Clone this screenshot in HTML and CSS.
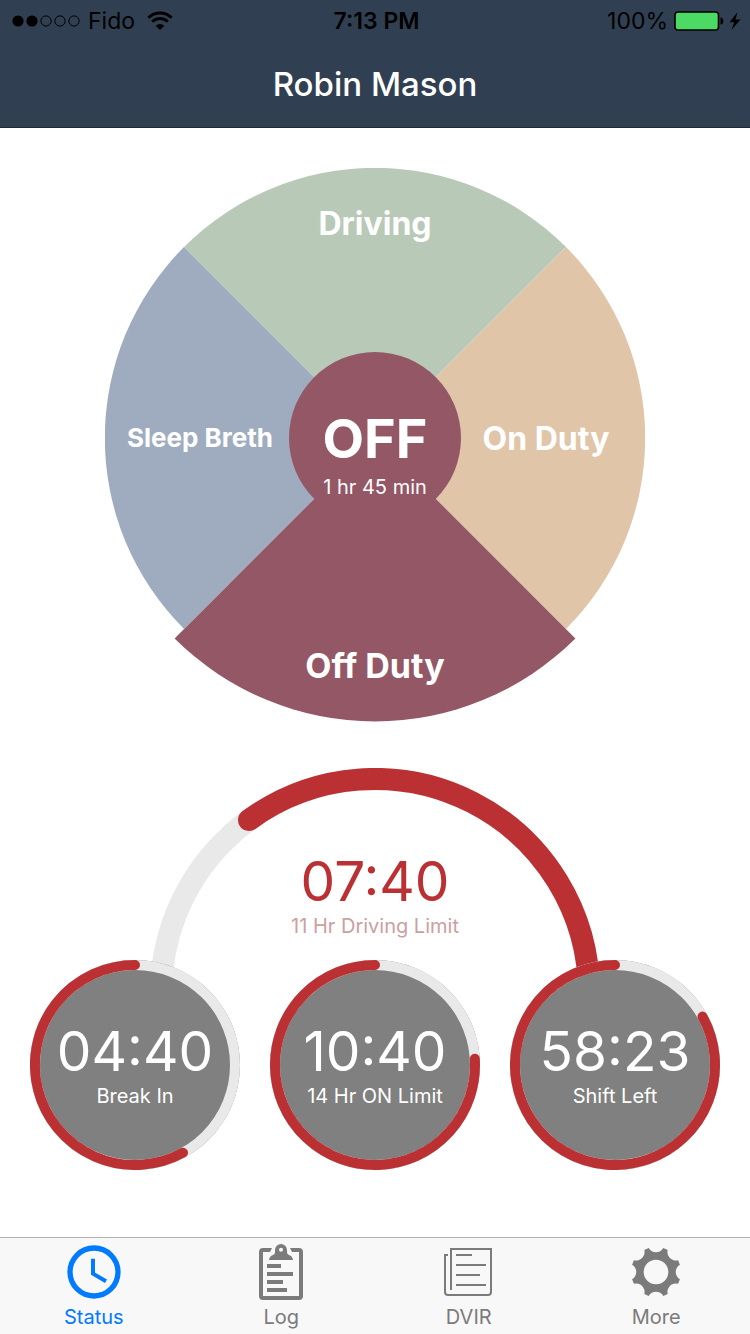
FILE: index.html
```html
<!DOCTYPE html>
<html lang="en">
<head>
<meta charset="utf-8">
<meta name="viewport" content="width=device-width, initial-scale=1">
<title>Robin Mason</title>
<link rel="stylesheet" href="styles.css">
</head>
<body>
<div class="app">
  <header class="header">
    <div class="statusbar">
      <div class="carrier">
        <svg class="signal" viewBox="0 0 68 12" width="68" height="12" aria-hidden="true">
          <circle cx="6" cy="6" r="5.6"/><circle cx="20" cy="6" r="5.6"/>
          <g fill="none" stroke="#000"><circle cx="34" cy="6" r="5.1"/><circle cx="48" cy="6" r="5.1"/><circle cx="62" cy="6" r="5.1"/></g>
        </svg>
        <span>Fido</span>
        <svg class="wifi" viewBox="0 0 26 20" width="26" height="20" aria-hidden="true">
          <g fill="none" stroke="#000" stroke-width="2.9"><path d="M1.4 6.8a16.400 16.400 0 0 1 23.2 0"/><path d="M5.2 10.800a11 11 0 0 1 15.600 0"/></g>
          <path d="M13 19l-4.300-4.300a6.100 6.100 0 0 1 8.600 0z"/>
        </svg>
      </div>
      <div class="time">7:13 PM</div>
      <div class="power">
        <span>100%</span>
        <svg viewBox="0 0 67 20" width="67" height="20" aria-hidden="true">
          <rect x="1" y="1" width="43.5" height="18" rx="3" fill="#4cd964" stroke="#000" stroke-width="1.6"/>
          <path d="M46.5 6.5q2.8.4 2.8 3.5t-2.8 3.5z"/>
          <path d="M63.5 1L55.5 11.2h4.7L57.5 19 66.500 8.500h-5z"/>
        </svg>
      </div>
    </div>
    <h1 class="title">Robin Mason</h1>
  </header>

  <main class="main">
    <section class="wheel" aria-label="Duty status">
      <svg class="wheel-art" viewBox="0 0 540 554" aria-hidden="true">
        <path fill="#b9c9b8" d="M270 270L79 79A270 270 0 0 1 461 79Z"/>
        <path fill="#e0c5a9" d="M270 270L461 79A270 270 0 0 1 461 461Z"/>
        <path fill="#9facc0" d="M270 270L79 461A270 270 0 0 1 79 79Z"/>
        <path fill="#945766" d="M270 270L470.400 470.400A283.400 283.400 0 0 1 69.600 470.400Z"/>
        <circle fill="#945766" cx="270" cy="270" r="86"/>
      </svg>
      <div class="wheel-labels">
        <button class="slice slice-driving" type="button">Driving</button>
        <button class="slice slice-sleep" type="button">Sleep Breth</button>
        <div class="current">
          <strong class="current-code">OFF</strong>
          <span class="caption">1 hr 45 min</span>
        </div>
        <button class="slice slice-on" type="button">On Duty</button>
        <button class="slice slice-off" type="button">Off Duty</button>
      </div>
    </section>

    <section class="gauges" aria-label="Hours remaining">
      <div class="arc">
        <svg class="gauge-art" viewBox="0 0 450 225" aria-hidden="true">
          <g fill="none" stroke-width="22">
            <path stroke="#e9e9e9" d="M11 225A214 214 0 0 1 439 225"/>
            <path stroke="#bb3133" stroke-linecap="round" d="M99 52A214 214 0 0 1 439 225"/>
          </g>
        </svg>
        <div class="reading arc-reading">
          <span class="value">07:40</span>
          <span class="caption">11 Hr Driving Limit</span>
        </div>
      </div>
      <div class="dials">
        <div class="dial">
          <svg class="gauge-art" viewBox="0 0 210 210" aria-hidden="true">
            <circle cx="105" cy="105" r="105" fill="#808080"/>
            <circle class="ring" cx="105" cy="105" r="100"/>
            <path class="progress" d="M105 5A100 100 0 1 0 153 192.700"/>
          </svg>
          <div class="reading"><span class="value">04:40</span><span class="caption">Break In</span></div>
        </div>
        <div class="dial">
          <svg class="gauge-art" viewBox="0 0 210 210" aria-hidden="true">
            <circle cx="105" cy="105" r="105" fill="#808080"/>
            <circle class="ring" cx="105" cy="105" r="100"/>
            <path class="progress" d="M105 5A100 100 0 1 0 204.800 98.700"/>
          </svg>
          <div class="reading"><span class="value">10:40</span><span class="caption">14 Hr ON Limit</span></div>
        </div>
        <div class="dial">
          <svg class="gauge-art" viewBox="0 0 210 210" aria-hidden="true">
            <circle cx="105" cy="105" r="105" fill="#808080"/>
            <circle class="ring" cx="105" cy="105" r="100"/>
            <path class="progress" d="M105 5A100 100 0 1 0 192.500 56.600"/>
          </svg>
          <div class="reading"><span class="value">58:23</span><span class="caption">Shift Left</span></div>
        </div>
      </div>
    </section>
  </main>

  <nav class="tabs" aria-label="Main">
    <a class="tab tab-active" href="#status" aria-current="page">
      <svg class="tab-icon" viewBox="0 0 60 56" aria-hidden="true"><g fill="none" stroke="currentColor"><circle cx="30" cy="28" r="24" stroke-width="5.300"/><path stroke-width="4" d="M29 14.700V29.700L42 37.200"/></g></svg>
      <span>Status</span>
    </a>
    <a class="tab" href="#log">
      <svg class="tab-icon" viewBox="0 0 60 56" aria-hidden="true">
        <path fill="currentColor" d="M21 4H12Q8 4 8 8V52Q8 56 12 56H48Q52 56 52 52V8Q52 4 48 4H39L41 8H48V52H12V8H19Z"/>
        <path fill="currentColor" fill-rule="evenodd" d="M18 16Q18.500 12 22 11Q24 10.500 24 8V6A6 6 0 0 1 36 6V8Q36 10.500 38 11Q41.500 12 42 16ZM30 3.800A2 2 0 1 0 30 7.800A2 2 0 1 0 30 3.800Z"/>
        <path stroke="currentColor" stroke-width="4" d="M16 22H30M16 30H42M16 38H32M16 46H36"/>
      </svg>
      <span>Log</span>
    </a>
    <a class="tab" href="#dvir">
      <svg class="tab-icon" viewBox="0 0 60 56" aria-hidden="true"><path fill="none" stroke="currentColor" stroke-width="2" d="M9 11H6V48Q6 51 9 51H49Q52 51 52 48V5H12V46M17 11H33M17 21H47M17 31H41M17 41H47"/></svg>
      <span>DVIR</span>
    </a>
    <a class="tab" href="#more">
      <svg class="tab-icon" viewBox="0 0 60 56" aria-hidden="true"><path fill="currentColor" fill-rule="evenodd" d="M22.700 4.100A8.500 8.500 0 0 0 37.300 4.100L41.700 5.900A8.500 8.500 0 0 0 52.100 16.300L53.900 20.700A8.500 8.500 0 0 0 53.900 35.300L52.100 39.700A8.500 8.500 0 0 0 41.700 50.100L37.300 51.900A8.500 8.500 0 0 0 22.700 51.900L18.300 50.100A8.500 8.500 0 0 0 7.900 39.700L6.100 35.300A8.500 8.500 0 0 0 6.100 20.700L7.900 16.300A8.500 8.500 0 0 0 18.300 5.900ZM30 15.700A12.300 12.300 0 1 0 30 40.300A12.300 12.300 0 1 0 30 15.700Z"/></svg>
      <span>More</span>
    </a>
  </nav>
</div>
</body>
</html>
```

FILE: styles.css
```css
* {
  box-sizing: border-box;
}

body {
  margin: 0;
  background: #fff;
  font-family: Inter, "Liberation Sans", sans-serif;
}

.app {
  display: flex;
  flex-direction: column;
  min-height: 100vh;
}

/* Header */
.header {
  padding-bottom: 23px;
  border-bottom: 1px solid #1f2936;
  background: #304052;
}

.statusbar {
  display: grid;
  grid-template-columns: 1fr auto 1fr;
  align-items: center;
  height: 41px;
  padding: 0 9px 0 12px;
  color: #000;
  font-size: 23px;
  line-height: 42px;
}

.carrier,
.power {
  display: flex;
  align-items: center;
}

.signal {
  margin-right: 8px;
}

.wifi {
  margin-left: 12px;
}

.time {
  font-weight: 600;
}

.power {
  justify-content: flex-end;
  gap: 6px;
}

.title {
  margin: 23px 0 0;
  color: #fff;
  font-size: 33px;
  font-weight: 500;
  line-height: 40px;
  text-align: center;
}

.main {
  flex: 1;
  padding: 40px 0 60px;
}

/* Duty wheel */
.wheel {
  display: grid;
  width: 72%;
  max-width: 540px;
  margin: 0 auto;
}

.wheel-art,
.wheel-labels {
  grid-area: 1 / 1;
}

.wheel-art {
  display: block;
  width: 100%;
}

.wheel-labels {
  display: grid;
  grid-template-columns: 184fr 172fr 184fr;
  grid-template-rows: 184fr 172fr 198fr;
  color: #fff;
}

.slice {
  display: flex;
  align-items: center;
  justify-content: center;
  padding: 0;
  border: 0;
  background: none;
  color: inherit;
  font: 700 32px/40px Inter, "Liberation Sans", sans-serif;
  white-space: nowrap;
  cursor: pointer;
}

.slice-driving {
  grid-column: 1 / -1;
  align-items: flex-start;
  padding-top: 36px;
}

.slice-sleep {
  padding-left: 6px;
  font-size: 26px;
}

.slice-on {
  padding-top: 2px;
  padding-right: 14px;
}

.slice-off {
  grid-column: 1 / -1;
  align-items: flex-end;
  padding-bottom: 36px;
  font-size: 34px;
}

.current {
  display: flex;
  flex-direction: column;
  align-items: center;
  gap: 4px;
  padding-top: 55px;
}

.current-code {
  font-size: 54px;
  line-height: 64px;
}

.caption {
  font-size: 20px;
  line-height: 24px;
  white-space: nowrap;
}

/* Gauges */
.gauges {
  max-width: 750px;
  margin: 46px auto 0;
}

.arc {
  display: grid;
  width: 60%;
  margin: 0 auto -33px;
  color: #bb3133;
}

.arc .caption {
  color: #cba0a0;
}

.gauge-art,
.reading {
  grid-area: 1 / 1;
}

.gauge-art {
  display: block;
  width: 100%;
}

.reading {
  display: flex;
  flex-direction: column;
  align-items: center;
  gap: 1px;
  padding-top: 59px;
}

.arc-reading {
  padding-top: 81px;
}

.value {
  font-size: 55px;
  font-weight: 400;
  line-height: 64px;
}

.dials {
  position: relative;
  display: grid;
  grid-template-columns: repeat(3, 1fr);
  gap: 30px;
  padding: 0 30px;
}

.dial {
  display: grid;
  color: #fff;
}

.ring,
.progress {
  fill: none;
  stroke-width: 10px;
}

.ring {
  stroke: #e9e9e9;
}

.progress {
  stroke: #bb3133;
  stroke-linecap: round;
}

/* Tab bar */
.tabs {
  display: grid;
  grid-template-columns: repeat(4, 1fr);
  border-top: 1px solid #b2b2b2;
  background: #f8f8f8;
}

.tab {
  display: flex;
  flex-direction: column;
  align-items: center;
  gap: 5px;
  padding: 6px 0 5px;
  color: #7b7b7b;
  font-size: 20px;
  line-height: 24px;
  text-decoration: none;
}

.tab-active {
  color: #007aff;
}

.tab-icon {
  width: 60px;
  height: 56px;
}
```
